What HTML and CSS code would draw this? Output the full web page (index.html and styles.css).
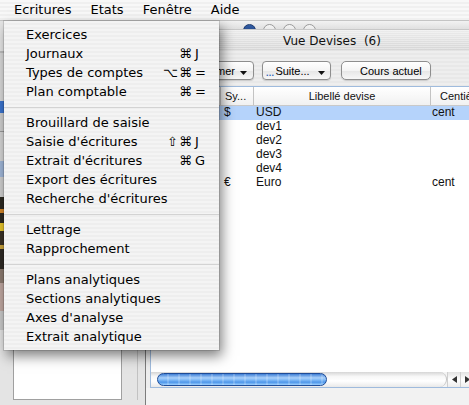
FILE: index.html
```html
<!DOCTYPE html>
<html lang="fr">
<head>
<meta charset="utf-8">
<title>Vue Devises</title>
<link rel="stylesheet" href="styles.css">
</head>
<body>
<div class="screen">
  <div class="menubar">
    <span class="mb-item">Ecritures</span>
    <span class="mb-item">Etats</span>
    <span class="mb-item">Fenêtre</span>
    <span class="mb-item">Aide</span>
  </div>
  <div class="desktop">
    <div class="backwin">
      <div class="back-top"></div>
      <div class="back-bottom">
        <div class="back-box"></div>
        <div class="back-line"></div>
      </div>
    </div>
    <div class="win">
      <div class="peek">
        <span class="dot dot-blue"></span>
        <span class="dot"></span>
        <span class="dot"></span>
        <span class="dot"></span>
      </div>
      <div class="titlebar">Vue Devises&nbsp;&nbsp;(6)</div>
      <div class="toolbar">
        <div class="btn popup first"><span class="btn-label">Supprimer</span><svg class="caret" width="7" height="4" viewBox="0 0 7 4"><path d="M0 0h7L3.5 4z"/></svg></div>
        <div class="btn popup suite"><span class="dots">...</span><span class="btn-label">Suite...</span><svg class="caret" width="7" height="4" viewBox="0 0 7 4"><path d="M0 0h7L3.5 4z"/></svg></div>
        <div class="btn cours">Cours actuel</div>
      </div>
      <div class="scroll">
        <div class="thead">
          <div class="th"></div>
          <div class="th sy">Sy...</div>
          <div class="th lib">Libellé devise</div>
          <div class="th cen">Centièmes</div>
        </div>
        <div class="tbody">
          <div class="row sel"><div class="td"></div><div class="td sy">$</div><div class="td lib">USD</div><div class="td cen">cent</div></div>
          <div class="row"><div class="td"></div><div class="td sy"></div><div class="td lib">dev1</div><div class="td cen"></div></div>
          <div class="row"><div class="td"></div><div class="td sy"></div><div class="td lib">dev2</div><div class="td cen"></div></div>
          <div class="row"><div class="td"></div><div class="td sy"></div><div class="td lib">dev3</div><div class="td cen"></div></div>
          <div class="row"><div class="td"></div><div class="td sy"></div><div class="td lib">dev4</div><div class="td cen"></div></div>
          <div class="row"><div class="td"></div><div class="td sy">€</div><div class="td lib">Euro</div><div class="td cen">cent</div></div>
        </div>
        <div class="hscroll">
          <div class="track"><div class="thumb"></div></div>
          <div class="arrow"><svg width="5" height="7" viewBox="0 0 5 7"><path d="M5 0v7L0 3.5z"/></svg></div>
          <div class="arrow"><svg width="5" height="7" viewBox="0 0 5 7"><path d="M0 0v7l5-3.5z"/></svg></div>
        </div>
      </div>
      <div class="winfoot"></div>
    </div>
  </div>

  <div class="menu">
    <div class="mi"><span class="ml">Exercices</span></div>
    <div class="mi"><span class="ml">Journaux</span><span class="mods">⌘</span><span class="key">J</span></div>
    <div class="mi"><span class="ml">Types de comptes</span><span class="mods">⌥⌘</span><span class="key">=</span></div>
    <div class="mi"><span class="ml">Plan comptable</span><span class="mods">⌘</span><span class="key">=</span></div>
    <div class="msep"></div>
    <div class="mi"><span class="ml">Brouillard de saisie</span></div>
    <div class="mi"><span class="ml">Saisie d'écritures</span><span class="mods">⇧⌘</span><span class="key">J</span></div>
    <div class="mi"><span class="ml">Extrait d'écritures</span><span class="mods">⌘</span><span class="key">G</span></div>
    <div class="mi"><span class="ml">Export des écritures</span></div>
    <div class="mi"><span class="ml">Recherche d'écritures</span></div>
    <div class="msep"></div>
    <div class="mi"><span class="ml">Lettrage</span></div>
    <div class="mi"><span class="ml">Rapprochement</span></div>
    <div class="msep"></div>
    <div class="mi"><span class="ml">Plans analytiques</span></div>
    <div class="mi"><span class="ml">Sections analytiques</span></div>
    <div class="mi"><span class="ml">Axes d'analyse</span></div>
    <div class="mi"><span class="ml">Extrait analytique</span></div>
  </div>
</div>
</body>
</html>
```
FILE: styles.css
```css
* { box-sizing: border-box; }
html, body { margin: 0; padding: 0; }
body {
  width: 469px;
  height: 405px;
  overflow: hidden;
  background: #e8e8e8;
  font-family: "DejaVu Sans", sans-serif;
  color: #000;
}
.screen {
  position: relative;
  width: 469px;
  height: 405px;
  display: flex;
  flex-direction: column;
  overflow: hidden;
}

/* menu bar */
.menubar {
  flex: none;
  height: 21px;
  display: flex;
  align-items: center;
  padding-left: 4.5px;
  background: repeating-linear-gradient(to bottom, #f8f8f8 0 2px, #f0f0f0 2px 4px);
  border-bottom: 1px solid #c4c4c4;
  font-size: 13px;
}
.mb-item { padding: 0 9.5px; line-height: 20px; white-space: nowrap; }

/* desktop */
.desktop {
  flex: 1;
  display: grid;
  grid-template-columns: 145px 373px;
  min-height: 0;
}

/* window behind, at left */
.backwin { display: flex; flex-direction: column; background: #e2e2e2; }
.back-top {
  flex: 1;
  background: linear-gradient(to bottom,
    #e6e6e6 0, #e6e6e6 30px,
    #bdbdbd 30px, #bdbdbd 32px,
    #d9d9d9 32px, #d9d9d9 80px,
    #3b74cf 80px, #3b74cf 92px,
    #cfcfcf 92px, #cfcfcf 110px,
    #9a9a9a 110px, #9a9a9a 111px,
    #d4d4d4 111px, #d4d4d4 140px,
    #9fb6d8 140px, #9fb6d8 156px,
    #cfcfcf 156px, #cfcfcf 176px,
    #2d2a22 176px, #2d2a22 188px,
    #d4862a 188px, #d4862a 192px,
    #2d2a22 192px, #2d2a22 202px,
    #e7c52c 202px, #e7c52c 210px,
    #3a3226 210px, #3a3226 224px,
    #c9a23a 224px, #c9a23a 228px,
    #2f2b25 228px, #2f2b25 248px,
    #8c7b70 248px, #8c7b70 262px,
    #bfa7a0 262px, #bfa7a0 290px,
    #c8c8c8 290px);
}
.back-bottom {
  flex: none;
  height: 75px;
  display: flex;
  padding: 0 0 5px 13px;
  background: #e4e4e4;
}
.back-box { width: 109px; background: #fff; border: 1px solid #a0a0a0; }
.back-line { width: 1px; margin-left: 15px; background: #c2c2c2; }

/* front window */
.win {
  display: flex;
  flex-direction: column;
  border-left: 1px solid #7c7c7c;
  background: #ededed;
  min-height: 0;
}
.peek {
  flex: none;
  height: 8px;
  display: flex;
  gap: 7px;
  padding-left: 97px;
  overflow: hidden;
  background: linear-gradient(#f2f2f2, #e0e0e0);
}
.dot {
  flex: none;
  width: 13px;
  height: 13px;
  margin-top: 3px;
  border-radius: 50%;
  border: 1px solid #9a9a9a;
  background: linear-gradient(#f6f6f6, #d4d4d4);
}
.dot-blue { border-color: #1d3a6e; background: linear-gradient(#335ea6, #1b3a74); }
.titlebar {
  flex: none;
  height: 22px;
  line-height: 22px;
  text-align: center;
  font-size: 12px;
  color: #111;
  background: repeating-linear-gradient(to bottom, rgba(255,255,255,0.35) 0 1px, rgba(255,255,255,0) 1px 2px),
              linear-gradient(#ececec, #d5d5d5);
  border-top: 1px solid #c8c8c8;
  white-space: nowrap;
}
.toolbar {
  flex: none;
  height: 35px;
  display: flex;
  align-items: flex-start;
  gap: 8px;
  padding: 10px 0 0 28px;
  background: repeating-linear-gradient(to bottom, #eeeeee 0 2px, #e8e8e8 2px 4px);
}
.btn {
  height: 19px;
  display: flex;
  align-items: center;
  font-family: "Liberation Sans", Arial, sans-serif;
  font-size: 11px;
  border: 1px solid #8e8e8e;
  border-radius: 4px;
  background: linear-gradient(#ffffff, #f4f4f4 50%, #e6e6e6 52%, #f7f7f7);
  box-shadow: 0 1px 1px rgba(0,0,0,0.15);
  white-space: nowrap;
}
.popup { justify-content: flex-end; padding-right: 6px; }
.first { width: 80px; overflow: hidden; }
.suite { width: 69px; justify-content: flex-start; padding-left: 3px; }
.dots { color: #2b5fb8; font-weight: bold; font-size: 9px; letter-spacing: 0.3px; margin-right: 1px; position: relative; top: 2px; }
.caret { margin-left: 5px; margin-top: 4px; fill: #111; flex: none; }
.suite .caret { margin-left: 8px; }
.cours { width: 90px; margin-left: 2px; padding-left: 18px; border-radius: 5px; }

/* table scroll view */
.scroll {
  flex: 1;
  width: 323px;
  margin-left: 4px;
  display: flex;
  flex-direction: column;
  background: #fff;
  border: 1px solid #9fbbdd;
  border-right: none;
  min-height: 0;
}
.thead {
  flex: none;
  height: 19px;
  display: grid;
  grid-template-columns: 69px 33px 177px 1fr;
  border-bottom: 1px solid #c9c9c9;
  background: linear-gradient(#ffffff, #f1f1f1);
  font-family: "Liberation Sans", Arial, sans-serif;
  font-size: 11px;
  line-height: 18px;
  color: #111;
}
.th { border-left: 1px solid #c3c3c3; white-space: nowrap; overflow: hidden; }
.th:first-child { border-left: none; }
.th.sy { padding-left: 4px; }
.th.lib { text-align: center; }
.th.cen { padding-left: 9px; }

.tbody { flex: 1; font-family: "Liberation Sans", Arial, sans-serif; font-size: 12px; color: #111; }
.row {
  display: grid;
  grid-template-columns: 69px 33px 177px 1fr;
  height: 14px;
  line-height: 12px;
}
.row.sel { background: #b5d3fb; }
.td { white-space: nowrap; overflow: hidden; }
.td.sy { padding-left: 4px; }
.td.lib { padding-left: 3px; }
.td.cen { padding-left: 2px; }

.hscroll {
  flex: none;
  height: 15px;
  display: flex;
  background: #f4f4f4;
}
.track {
  flex: 1;
  display: flex;
  align-items: center;
  padding-left: 6px;
  border-radius: 0 8px 8px 0;
  background: linear-gradient(#d6d6d6, #f7f7f7 30%, #ffffff 60%, #e9e9e9);
  border-right: 1px solid #c4c4c4;
}
.thumb {
  width: 170px;
  height: 13px;
  border-radius: 7px;
  border: 1px solid #1f4c97;
  background: repeating-linear-gradient(to right, rgba(255,255,255,0) 0 9px, rgba(255,255,255,0.18) 9px 11px),
              linear-gradient(#3f7fd6, #a9d0fa 35%, #7db8f6 55%, #4f97ea 75%, #9cd0ff);
}
.arrow {
  flex: none;
  width: 13px;
  display: flex;
  align-items: center;
  justify-content: center;
  border-left: 1px solid #cfcfcf;
  background: linear-gradient(#e2e2e2, #ffffff 50%, #ececec);
  fill: #333;
}
.winfoot { flex: none; height: 17px; background: #f2f2f2; }

/* dropdown menu */
.menu {
  position: absolute;
  top: 21px;
  left: 4px;
  width: 215px;
  padding: 4px 0;
  background: repeating-linear-gradient(to bottom, #f4f4f4 0 2px, #eeeeee 2px 4px);
  box-shadow: 0 0 0 1px rgba(0,0,0,0.12), 3px 6px 12px rgba(0,0,0,0.5);
  font-size: 13px;
  z-index: 5;
}
.mi {
  height: 19px;
  line-height: 19px;
  display: flex;
  padding: 0 12px 0 22px;
  white-space: nowrap;
}
.ml { flex: 1; }
.mods { text-align: right; margin-right: 2px; letter-spacing: 1px; }
.key { width: 12px; }
.msep { height: 12px; display: flex; align-items: center; }
.msep::before { content: ""; flex: 1; height: 1px; background: #d3d3d3; }
```
